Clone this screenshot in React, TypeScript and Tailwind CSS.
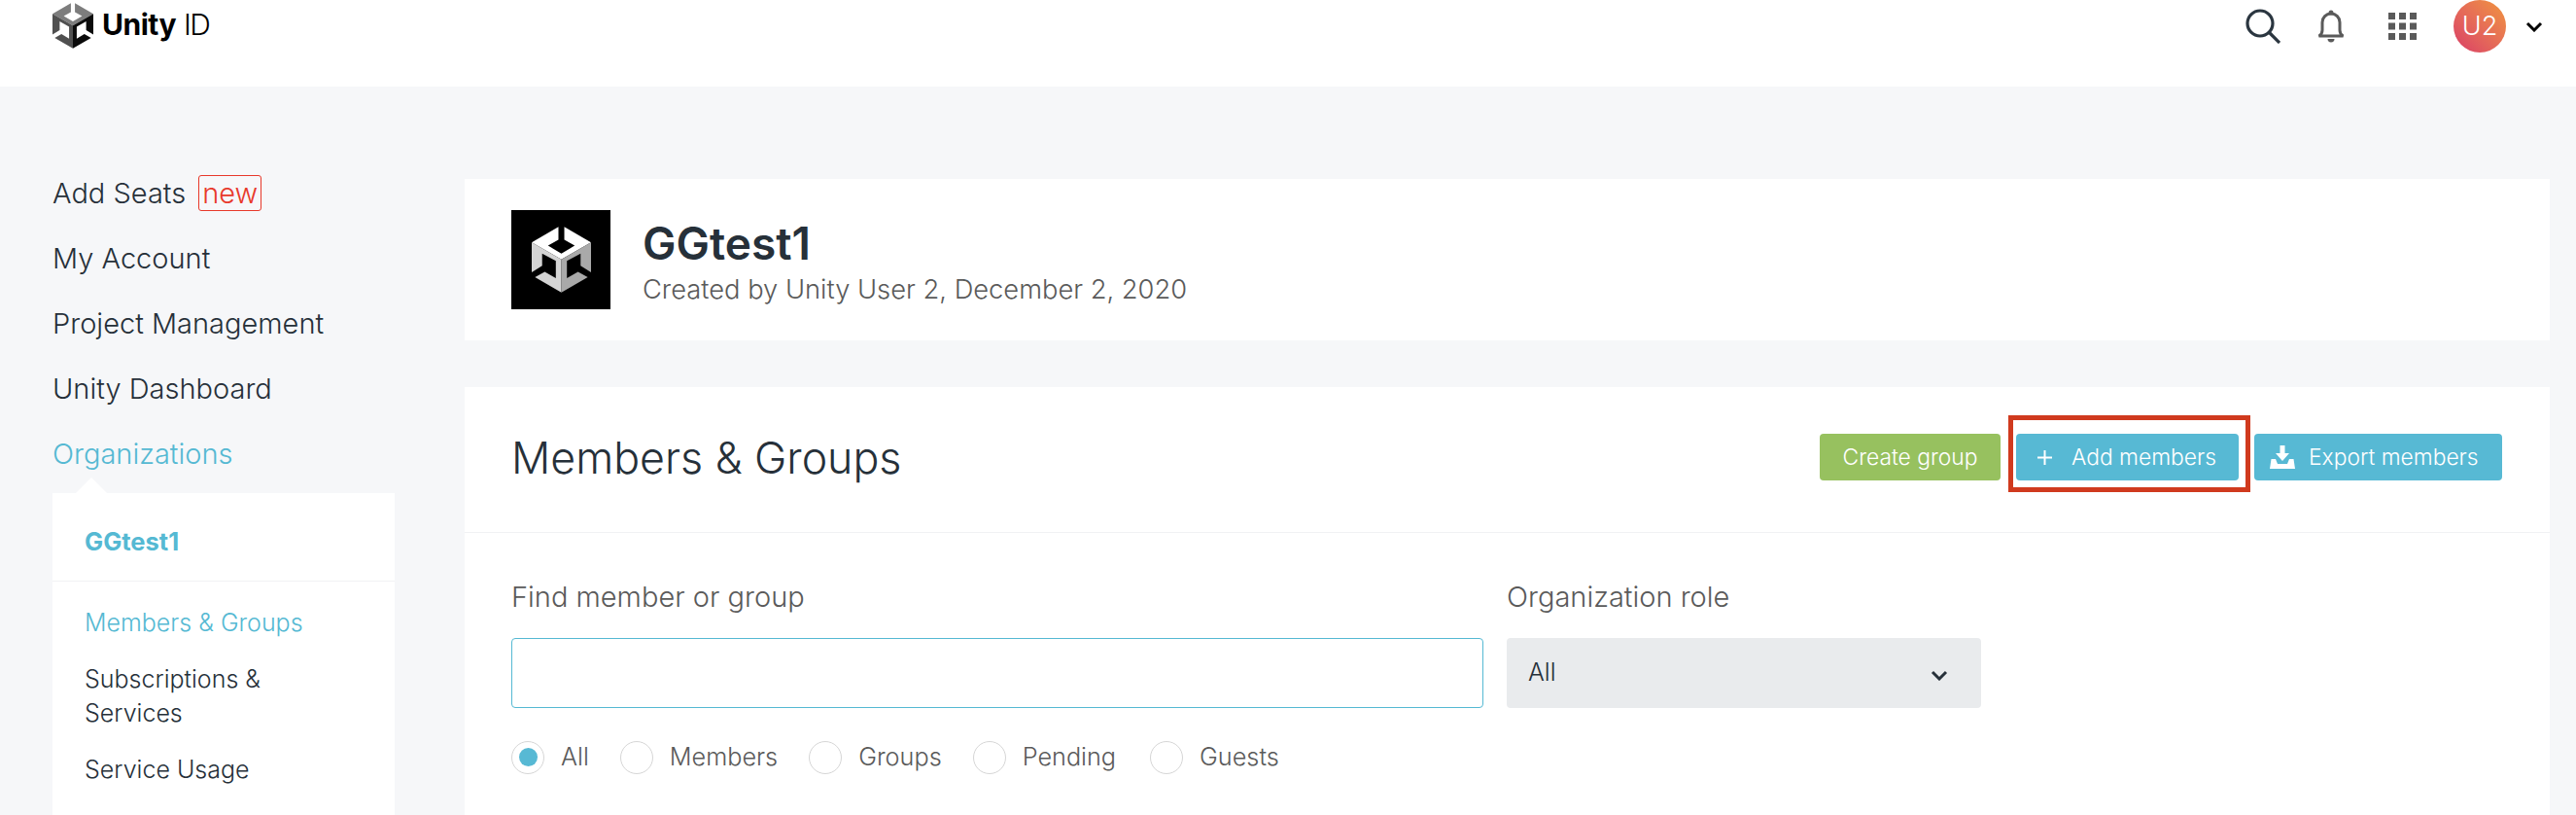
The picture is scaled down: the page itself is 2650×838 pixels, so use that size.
import { Fragment } from "react";

const NAV = ["My Account", "Project Management", "Unity Dashboard"];
const ROLES = [
  { label: "All", checked: true, gap: "mr-[32px]" },
  { label: "Members", checked: false, gap: "mr-[32px]" },
  { label: "Groups", checked: false, gap: "mr-[32px]" },
  { label: "Pending", checked: false, gap: "mr-[35px]" },
  { label: "Guests", checked: false, gap: "" },
];

function Cube({ className, top, left, right }: { className: string; top: string; left: string; right: string }) {
  return (
    <svg viewBox="0 0 182 202" className={className}>
      <polygon fill={top} points="0,48 82,0 82,40 50,58 91,82 132,58 100,40 100,0 182,48 91,100" />
      <polygon fill={left} points="0,48 91,100 91,202 10,155 40,138 74,158 74,105 32,82 32,120 0,140" />
      <polygon fill={right} points="182,48 91,100 91,202 172,155 142,138 108,158 108,105 150,82 150,120 182,140" />
    </svg>
  );
}

function Chevron({ className, color }: { className: string; color: string }) {
  return (
    <svg viewBox="0 0 18 11" className={className}>
      <path d="M2 2l7 7 7-7" fill="none" stroke={color} strokeWidth="3" />
    </svg>
  );
}

function Header() {
  return (
    <header className="h-[89px] bg-white flex items-start justify-between pl-[54px] pr-[34px]">
      <div className="flex items-center mt-[3px]">
        <Cube className="w-[42px] h-[47px]" top="#7d7d7d" left="#505050" right="#0b0b0b" />
        <span className="ml-[9px] mt-[-3px] text-[30px] font-bold text-black leading-none tracking-[-0.5px]">Unity</span>
        <span className="ml-[8px] mt-[-3px] text-[30px] font-light text-black leading-none tracking-[-1.5px]">ID</span>
      </div>
      <div className="flex items-center">
        <svg viewBox="0 0 36 36" className="w-[36px] h-[36px] mt-[-1px]">
          <circle cx="15" cy="15" r="13" fill="none" stroke="#2b3640" strokeWidth="3.2" />
          <path d="M24.5 24.5L35 35" stroke="#2b3640" strokeWidth="3.2" />
        </svg>
        <svg viewBox="0 0 28 34" className="w-[28px] h-[34px] ml-[38px] mt-[-1px]">
          <path
            d="M14 4a9 9 0 0 0-9 9v8c0 3-1.500 5-3.500 6h25c-2-1-3.500-3-3.500-6v-8a9 9 0 0 0-9-9z"
            fill="none"
            stroke="#5a5a5a"
            strokeWidth="3"
          />
          <circle cx="14" cy="3" r="2.500" fill="#5a5a5a" />
          <path d="M10.500 30h7a3.500 3.500 0 0 1-7 0z" fill="#5a5a5a" />
        </svg>
        <svg viewBox="0 0 29 28" className="w-[29px] h-[28px] ml-[45px]" fill="#5a5a5a">
          <rect x="0" y="0" width="7" height="7" />
          <rect x="11" y="0" width="7" height="7" />
          <rect x="22" y="0" width="7" height="7" />
          <rect x="0" y="10.500" width="7" height="7" />
          <rect x="11" y="10.500" width="7" height="7" />
          <rect x="22" y="10.500" width="7" height="7" />
          <rect x="0" y="21" width="7" height="7" />
          <rect x="11" y="21" width="7" height="7" />
          <rect x="22" y="21" width="7" height="7" />
        </svg>
        <div className="ml-[38px] w-[54px] h-[54px] rounded-full bg-gradient-to-tr from-[#d93a66] to-[#f0953a] flex items-center justify-center text-white text-[27px] font-light">
          U2
        </div>
        <Chevron className="w-[18px] h-[11px] ml-[20px]" color="#000000" />
      </div>
    </header>
  );
}

function Sidebar() {
  return (
    <aside className="w-[478px] shrink-0 pl-[54px] pt-[76px]">
      <div className="h-[67px] flex items-center text-[29px] font-light text-[#263039]">
        Add Seats
        <span className="ml-[13px] h-[37px] w-[65px] border border-[#e8392b] rounded-[3px] flex items-center justify-center text-[#e8392b]">
          new
        </span>
      </div>
      {NAV.map((item) => (
        <div key={item} className="h-[67px] flex items-center text-[29px] font-light text-[#263039]">
          {item}
        </div>
      ))}
      <div className="h-[67px] flex items-center text-[29px] font-light text-[#55b9d3]">Organizations</div>
      <div className="relative w-[352px] bg-white mt-[7px]">
        {/* little arrow above the submenu */}
        <div className="absolute left-[24px] top-[-16px] w-0 h-0 border-x-[16px] border-x-transparent border-b-[16px] border-b-white" />
        <div className="h-[91px] border-b border-[#f1f2f4] pl-[33px] pt-[33px] text-[25.500px] leading-[34px] font-bold text-[#55b9d3]">
          GGtest1
        </div>
        <div className="pl-[33px] pt-[25px] text-[25px] leading-[35px] font-light text-[#263039]">
          <div className="text-[#55b9d3]">Members &amp; Groups</div>
          <div className="mt-[23px] w-[260px]">Subscriptions &amp; Services</div>
          <div className="mt-[23px]">Service Usage</div>
          <div className="h-[60px]" />
        </div>
      </div>
    </aside>
  );
}

function MainPanel() {
  return (
    <main className="flex-1 pt-[95px] pr-[27px]">
      <section className="h-[166px] bg-white flex items-center pl-[48px]">
        <div className="w-[102px] h-[102px] bg-black flex items-center justify-center">
          <Cube className="w-[61px] h-[68px]" top="#ffffff" left="#d4d4d4" right="#a9a9a9" />
        </div>
        <div className="ml-[33px] mt-[14px]">
          <div className="text-[46px] leading-[48px] font-semibold text-[#263039]">GGtest1</div>
          <div className="text-[27.300px] leading-[48px] font-light text-[#5a5a5a]">Created by Unity User 2, December 2, 2020</div>
        </div>
      </section>

      <section className="mt-[48px] bg-white h-[600px]">
        <div className="h-[150px] pb-[5px] border-b border-[#f1f2f4] flex items-center justify-between pl-[48px] pr-[49px]">
          <h1 className="mt-[3px] text-[44.700px] font-light text-[#263039]">Members &amp; Groups</h1>
          <div className="flex items-center">
            <button className="h-[48px] w-[186px] rounded-[4px] bg-[#97c15f] text-white text-[22.800px] font-light">Create group</button>
            <div className="relative ml-[16px]">
              <button className="h-[48px] w-[229px] rounded-[4px] bg-[#57b9d4] text-white text-[22.800px] font-light flex items-center pl-[22px]">
                <svg viewBox="0 0 15 15" className="w-[15px] h-[15px]">
                  <path d="M7.500 0v15M0 7.500h15" stroke="#ffffff" strokeWidth="2" />
                </svg>
                <span className="ml-[20px]">Add members</span>
              </button>
              {/* annotation rectangle drawn over the button */}
              <div className="absolute left-[-8px] right-[-12px] top-[-19px] bottom-[-12px] border-[5px] border-[#d03a1e]" />
            </div>
            <button className="ml-[16px] h-[48px] w-[255px] rounded-[4px] bg-[#57b9d4] text-white text-[22.800px] font-light flex items-center pl-[16px]">
              <svg viewBox="0 0 26 24" className="w-[26px] h-[24px]" fill="#ffffff">
                <path d="M10.500 0h5v8h4.500L13 16 6 8h4.500z" />
                <path d="M1.500 14H6l2 5h10l2-5h4.500L26 24H0z" />
              </svg>
              <span className="ml-[14px]">Export members</span>
            </button>
          </div>
        </div>

        <div className="pl-[48px] pt-[46px]">
          <div className="flex">
            <div className="w-[1000px]">
              <label className="block text-[29px] leading-[40px] font-light text-[#5a5a5a]">Find member or group</label>
              <input className="block mt-[22px] w-full h-[72px] rounded-[4px] border-[1.500px] border-[#55b9d3] bg-white outline-none" />
            </div>
            <div className="w-[488px] ml-[24px]">
              <label className="block text-[29px] leading-[40px] font-light text-[#5a5a5a]">Organization role</label>
              <div className="mt-[22px] h-[72px] rounded-[4px] bg-[#e9ebed] flex items-center justify-between pl-[22px] pr-[34px] text-[25px] font-light text-[#263039]">
                All
                <Chevron className="w-[18px] h-[11px] mt-[4px]" color="#263039" />
              </div>
            </div>
          </div>
          <div className="flex items-center mt-[32px] text-[25.250px] font-light text-[#5a5a5a]">
            {ROLES.map((role) => (
              <Fragment key={role.label}>
                <span className="w-[34px] h-[34px] rounded-full border border-[#d6d6d6] flex items-center justify-center">
                  {role.checked && <span className="w-[19px] h-[19px] rounded-full bg-[#57b9d4]" />}
                </span>
                <span className={`ml-[17px] ${role.gap}`}>{role.label}</span>
              </Fragment>
            ))}
          </div>
        </div>
      </section>
    </main>
  );
}

export default function App() {
  return (
    <div className="h-[838px] overflow-hidden bg-[#f6f7f9] font-['Inter',sans-serif]">
      <Header />
      <div className="flex">
        <Sidebar />
        <MainPanel />
      </div>
    </div>
  );
}
